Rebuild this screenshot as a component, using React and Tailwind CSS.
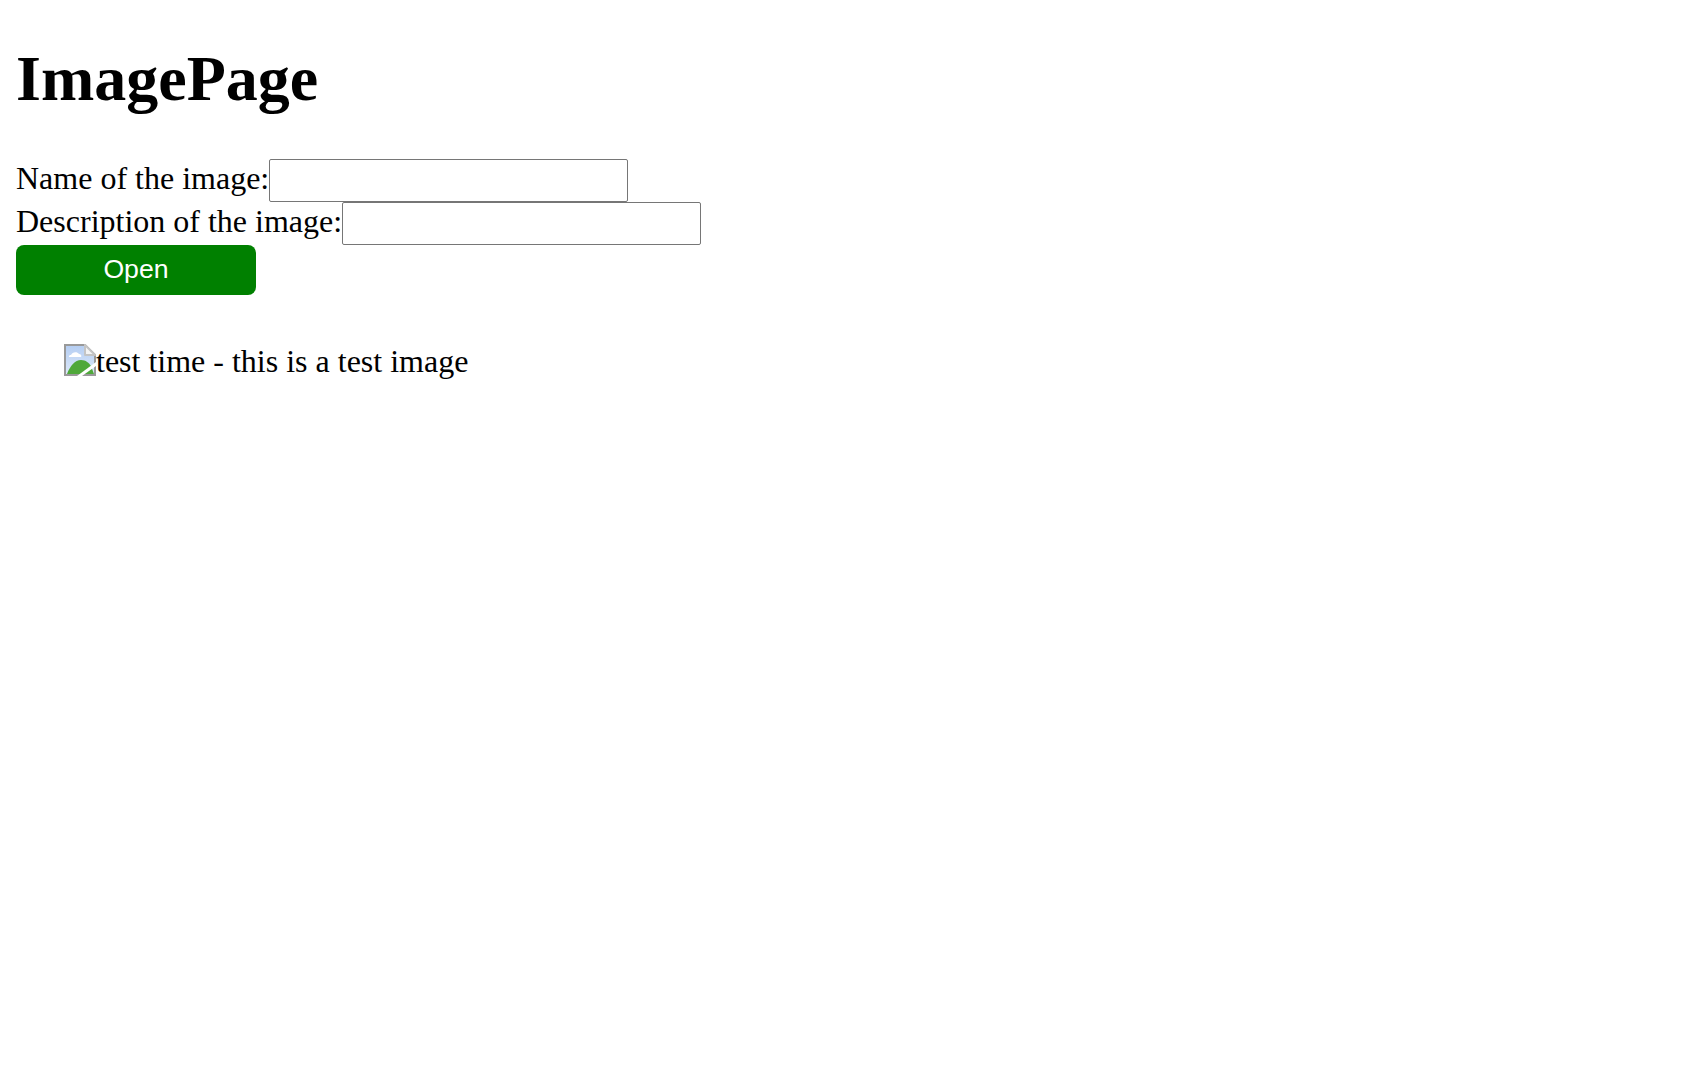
export default function App() {
  return (
    <div className="mx-4 font-['Liberation_Serif','Times_New_Roman',serif] text-[32px] leading-[normal] text-black">
      <h1 className="text-[64px] font-bold leading-[normal] mt-[42px] mb-[43px]">ImagePage</h1>
      <div>
        <label>Name of the image:</label>
        <input className="inline-block w-[359px] h-[43px] border border-[#767676] rounded-[2px] bg-white align-[-2px]" />
      </div>
      <div>
        <label>Description of the image:</label>
        <input className="inline-block w-[359px] h-[43px] border border-[#767676] rounded-[2px] bg-white align-[-2px]" />
      </div>
      <button className="block w-[240px] h-[50px] pb-[2px] rounded-lg bg-[#008000] text-white text-[26.67px] font-['Liberation_Sans',Arial,sans-serif]">Open</button>
      <div className="mt-[48px] ml-[48px] flex items-start">
        <svg width="32" height="32" viewBox="0 0 32 32" className="shrink-0 mt-px">
          <defs>
            <linearGradient id="sky" x1="0" y1="0" x2="0" y2="1">
              <stop offset="0" stopColor="#b4cdf2" />
              <stop offset="1" stopColor="#dde9fa" />
            </linearGradient>
          </defs>
          <path d="M1 1H21L31 11V31H1Z" fill="url(#sky)" stroke="#999999" strokeWidth="2" />
          <path d="M21 1V11H31Z" fill="#f4f4f4" stroke="#c4c4c4" strokeWidth="2" strokeLinejoin="round" />
          <path d="M7 11c1-3 6-4 8-1c2 0 3 2 2 3H6c-2 0-1-2 1-2Z" fill="#fff" />
          <path d="M3 30C6 22 11 16 17 16c5 0 8 3 10 6L30 30Z" fill="#4fa83a" />
          <path d="M13 32L32 18V22L18 32Z" fill="#fff" />
        </svg>
        <span>test time - this is a test image</span>
      </div>
    </div>
  );
}
